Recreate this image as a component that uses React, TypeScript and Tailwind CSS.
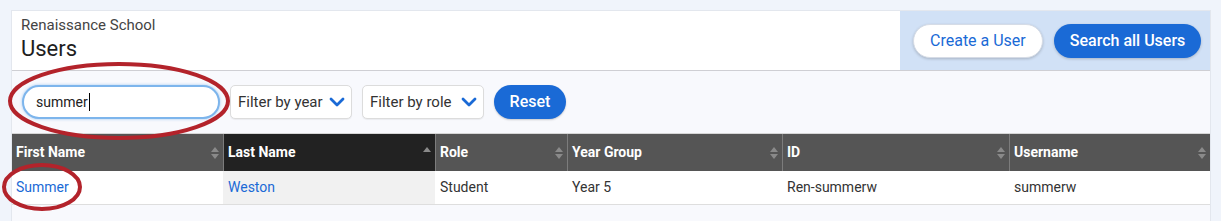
import React from "react";

const cols = [
  { label: "First Name", sort: "both" },
  { label: "Last Name", sort: "up" },
  { label: "Role", sort: "both" },
  { label: "Year Group", sort: "both" },
  { label: "ID", sort: "both" },
  { label: "Username", sort: "both" },
];

const row = ["Summer", "Weston", "Student", "Year 5", "Ren-summerw", "summerw"];

function SortIcon({ dir }: { dir: string }) {
  return (
    <svg width="8" height="14" viewBox="0 0 8 14" className="shrink-0">
      <path d="M4 1 L8 6 L0 6 Z" fill="#8a8a8a" />
      {dir === "both" && <path d="M4 13 L8 8 L0 8 Z" fill="#8a8a8a" />}
    </svg>
  );
}

function Chevron() {
  return (
    <svg width="16" height="10" viewBox="0 0 16 10" className="shrink-0">
      <path d="M2 2 L8 8 L14 2" fill="none" stroke="#1a6ad6" strokeWidth="2.8" strokeLinecap="round" strokeLinejoin="round" />
    </svg>
  );
}

function Select({ label }: { label: string }) {
  return (
    <div className="flex h-[34px] w-[122px] items-center justify-between rounded-[5px] border border-[#dcdcdc] bg-white pl-[7px] pr-[6px] text-[15px] text-[#333] shadow-[0_1px_1px_rgba(0,0,0,0.06)]">
      <span>{label}</span>
      <Chevron />
    </div>
  );
}

export default function App() {
  return (
    <div className="relative h-[221px] w-[1221px] overflow-hidden bg-[#f0f4fb] pl-[11px] pt-[10px]" style={{ fontFamily: "Roboto, 'Liberation Sans', sans-serif" }}>
      <div className="w-[1200px] border-t border-l border-r border-[#e3e7ee] bg-[#f8f9fd]">
        {/* header */}
        <div className="flex h-[60px] border-b border-[#cfcfd4] bg-white">
          <div className="flex-1 pl-[9px] pt-[4px]">
            <div className="text-[15px] leading-[20px] text-[#444]">Renaissance School</div>
            <div className="text-[22px] leading-[28px] text-[#1e1e1e]">Users</div>
          </div>
          <div className="flex w-[310px] items-center gap-[11px] bg-[#d1e1f6] pl-[13px]">
            <button className="h-[34px] rounded-full border border-[#d6dce6] bg-white px-[16px] text-[16px] text-[#1a6ad6] shadow-[0_1px_3px_rgba(0,0,0,0.2)]">
              Create a User
            </button>
            <button className="h-[34px] rounded-full bg-[#1a6ad6] px-[16px] text-[16px] font-medium text-white shadow-[0_1px_3px_rgba(0,0,0,0.2)]">
              Search all Users
            </button>
          </div>
        </div>

        {/* filters */}
        <div className="flex h-[62px] items-center gap-[10px] pl-[10px]">
          <div className="flex h-[34px] w-[198px] items-center rounded-full border-2 border-[#7db5ec] bg-white pl-[12px] text-[14px] text-[#222] shadow-[0_0_3px_rgba(70,150,230,0.5)]">
            <span>summer</span>
            <span className="ml-px h-[18px] w-px bg-black" />
          </div>
          <Select label="Filter by year" />
          <Select label="Filter by role" />
          <button className="h-[34px] w-[72px] rounded-full bg-[#1a6ad6] text-[16px] font-medium text-white shadow-[0_1px_2px_rgba(0,0,0,0.2)]">
            Reset
          </button>
        </div>

        {/* table */}
        <div className="border-t border-[#d6d6d6]">
          <div className="grid grid-cols-[211px_212px_132px_215px_227px_201px]">
            {cols.map((c, i) => (
              <div
                key={c.label}
                className={`flex h-[37px] items-center justify-between pl-[4px] pr-[4px] text-[14px] font-bold text-white ${
                  i === 1 ? "bg-[#222]" : "bg-[#555]"
                } ${i > 0 ? "border-l border-[#7c7c7c]" : ""}`}
              >
                <span>{c.label}</span>
                <SortIcon dir={c.sort} />
              </div>
            ))}
          </div>
          <div className="grid grid-cols-[211px_212px_132px_215px_227px_201px] border-b border-[#dedede]">
            {row.map((v, i) => (
              <div
                key={i}
                className={`flex h-[33px] items-center text-[14px] ${i > 0 ? "pl-[5px]" : "pl-[4px]"} ${
                  i < 2 ? "text-[#1a6ad6]" : "text-[#333]"
                } ${i === 1 ? "bg-[#f1f1f1]" : "bg-white"}`}
              >
                {v}
              </div>
            ))}
          </div>
          <div className="h-[20px]" />
        </div>
      </div>

      {/* annotation overlay */}
      <svg className="pointer-events-none absolute left-0 top-0" width="1221" height="221">
        <ellipse cx="119" cy="101" rx="109" ry="37" fill="none" stroke="#b3232b" strokeWidth="4" />
        <ellipse cx="42" cy="187" rx="38" ry="22" fill="none" stroke="#b3232b" strokeWidth="4" />
      </svg>
    </div>
  );
}
